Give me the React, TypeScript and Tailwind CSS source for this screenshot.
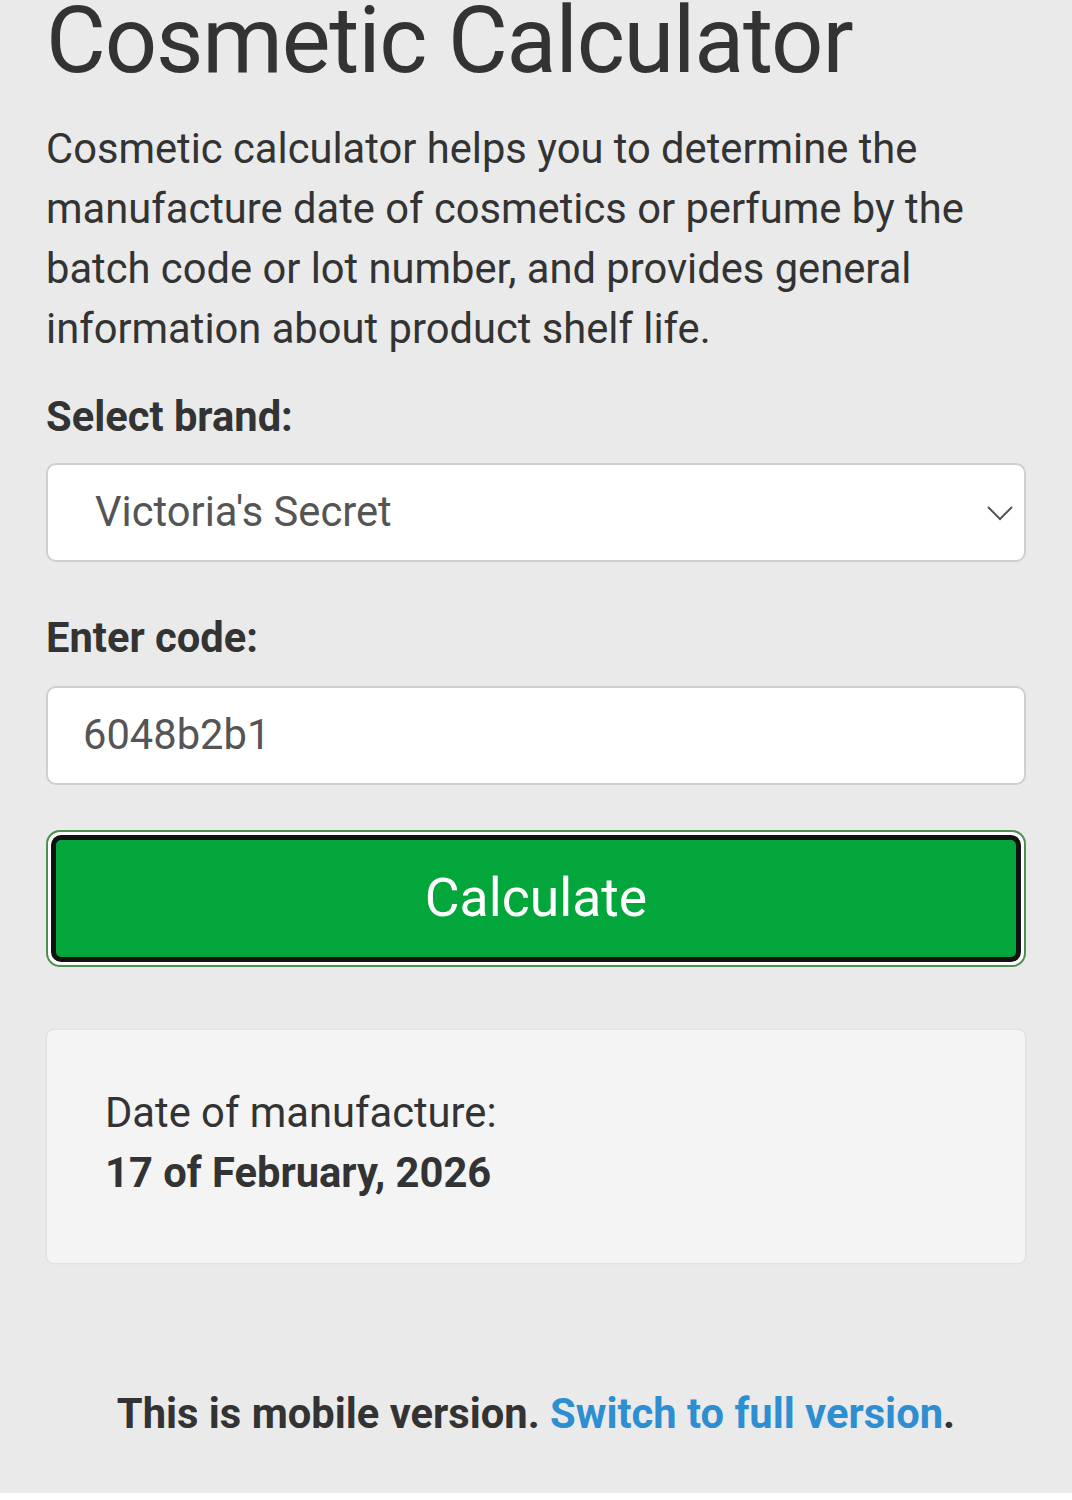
export default function App() {
  return (
    <div className="min-h-[1500px] w-full bg-[#eaeaea] text-[#333] font-['Roboto',sans-serif]">
      <div className="px-[46px]">
        <h1 className="text-[92px] leading-none tracking-[-1.2px] pt-[2px] -mt-[7px]">Cosmetic Calculator</h1>
        <p className="mt-[32px] text-[41.7px] leading-[60px]">
          Cosmetic calculator helps you to determine the manufacture date of cosmetics or perfume by the batch code or lot number, and provides general information about product shelf life.
        </p>
        <div className="mt-[28px] text-[41.7px] font-bold leading-[60px]">Select brand:</div>
        <div className="mt-[16px] h-[99px] flex items-center justify-between rounded-[10px] border-2 border-[#cfcfcf] bg-white pl-[47px] pr-[10px]">
          <span className="text-[41.7px] text-[#555]">Victoria's Secret</span>
          <svg width="28" height="18" viewBox="0 0 28 18" fill="none" stroke="#555" strokeWidth="2">
            <path d="M2 3 L14 15 L26 3" />
          </svg>
        </div>
        <div className="mt-[46px] text-[41.7px] font-bold leading-[60px]">Enter code:</div>
        <div className="mt-[18px] h-[99px] flex items-center rounded-[10px] border-2 border-[#cfcfcf] bg-white pl-[35px]">
          <span className="text-[41.7px] text-[#555]">6048b2b1</span>
        </div>
        <div className="mt-[45px] rounded-[14px] border-2 border-[#4e8f52] bg-white p-[3px]">
          <button className="flex h-[127px] w-full items-center justify-center rounded-[10px] border-[5px] border-[#111] bg-[#02a63a] text-[53.5px] text-white">
            Calculate
          </button>
        </div>
        <div className="mt-[62px] h-[235px] rounded-[8px] border border-[#e2e2e2] bg-[#f4f4f4] pl-[58px] pt-[53px] shadow-[0_0_2px_rgba(0,0,0,0.06)]">
          <div className="text-[41.7px] leading-[60px]">Date of manufacture:</div>
          <div className="text-[41.7px] font-bold leading-[60px]">17 of February, 2026</div>
        </div>
        <div className="mt-[120px] text-center text-[41.7px] font-bold leading-[60px]">
          This is mobile version. <a className="text-[#2d8fd2]">Switch to full version</a>.
        </div>
      </div>
    </div>
  );
}
